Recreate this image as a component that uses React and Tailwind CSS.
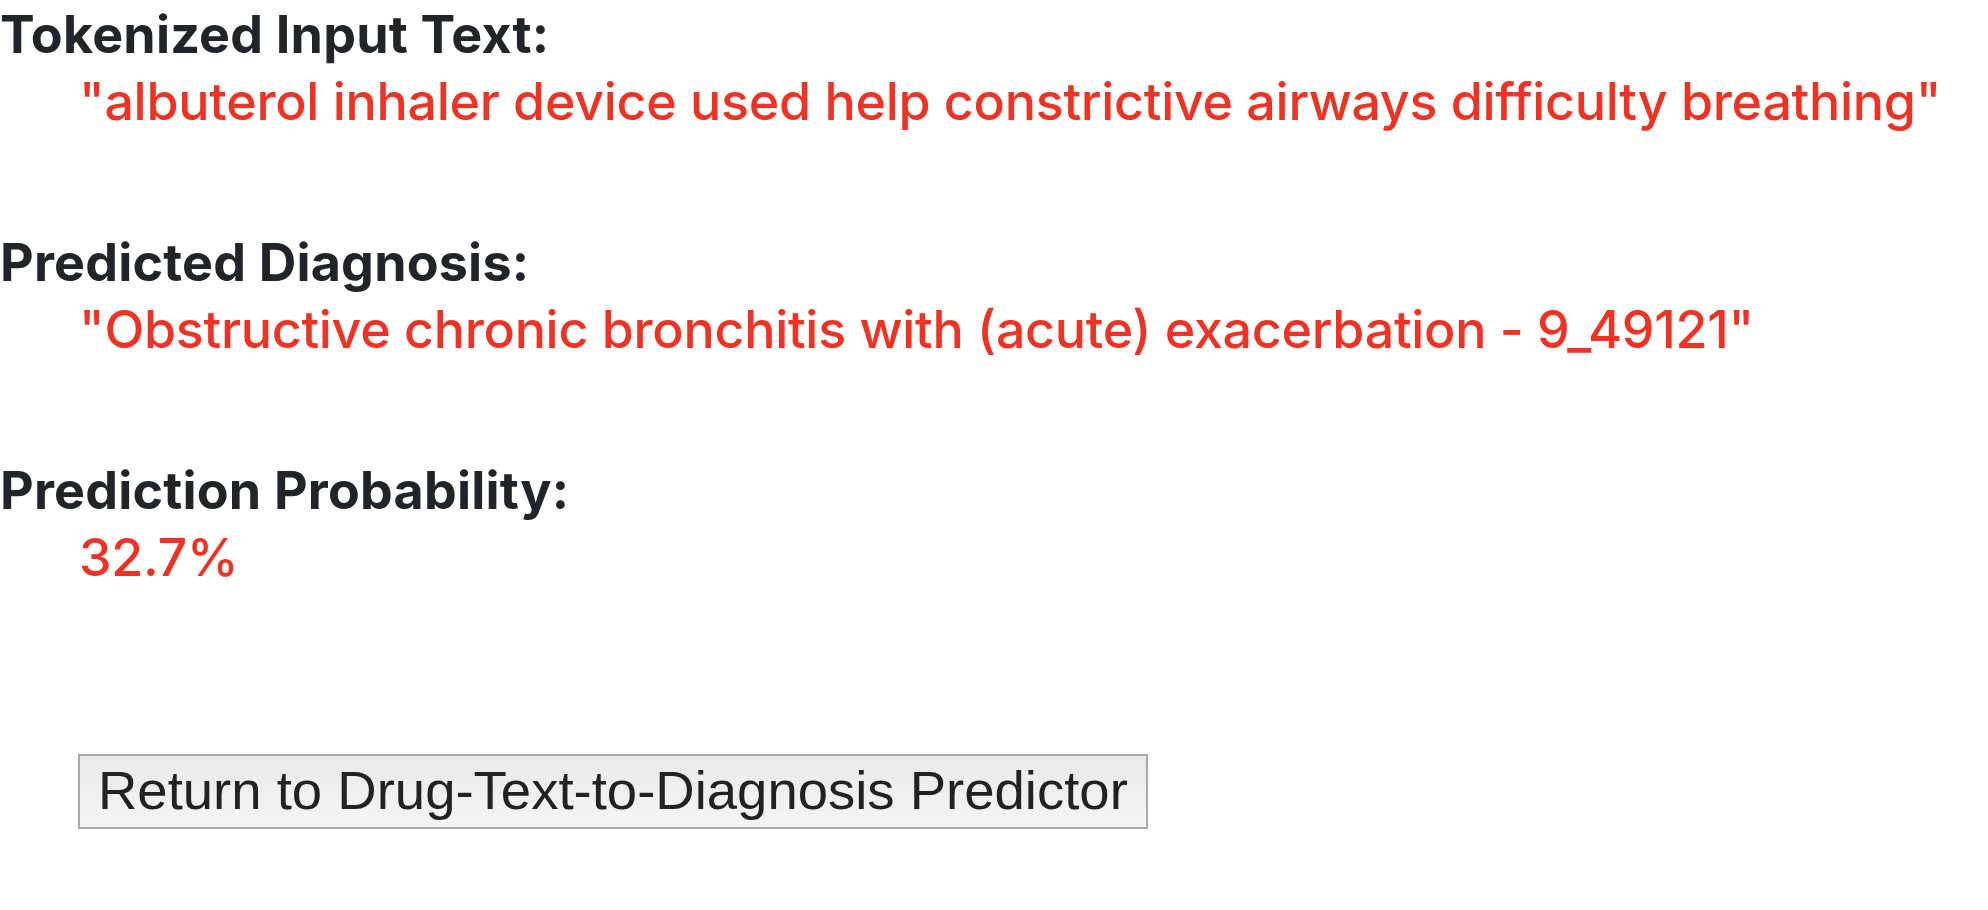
import React from 'react';

const Section = ({ label, value }) => (
  <div className="mb-[94px]">
    <h3 className="text-[52px] leading-[67px] font-bold text-[#212529] tracking-[0.2px]">{label}</h3>
    <p className="text-[52px] leading-[67px] font-medium text-[#ee3324] pl-[79px] tracking-[-0.3px]">{value}</p>
  </div>
);

export default function App() {
  return (
    <div className="min-h-[910px] bg-white pt-px font-['Inter',sans-serif]">
      <Section label="Tokenized Input Text:" value={'"albuterol inhaler device used help constrictive airways difficulty breathing"'} />
      <Section label="Predicted Diagnosis:" value={'"Obstructive chronic bronchitis with (acute) exacerbation - 9_49121"'} />
      <Section label="Prediction Probability:" value="32.7%" />
      <div className="pl-[78px] mt-[163px]">
        <button
          type="button"
          className="h-[75px] px-[18px] border-[2px] border-[#a9a9a9] bg-gradient-to-b from-[#e9e9e9] to-[#f5f5f5] text-[54.5px] leading-none text-[#222] font-['Liberation_Sans',sans-serif]"
        >
          Return to Drug-Text-to-Diagnosis Predictor
        </button>
      </div>
    </div>
  );
}
